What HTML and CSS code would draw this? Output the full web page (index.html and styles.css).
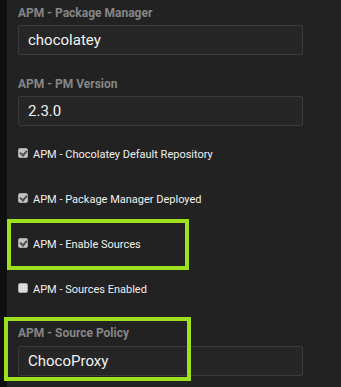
FILE: index.html
```html
<!DOCTYPE html>
<html lang="en">

<head>
    <meta charset="UTF-8">
    <title>APM Settings</title>
    <link rel="stylesheet" href="styles.css">
</head>

<body>
    <div class="page">
        <div class="rail"></div>

        <div class="content">
            <div class="field">
                <label class="field-label" for="pkgManager">APM - Package Manager</label>
                <input type="text" id="pkgManager" class="field-input" value="chocolatey">
            </div>
            <div class="field">
                <label class="field-label" for="pmVersion">APM - PM Version</label>
                <input type="text" id="pmVersion" class="field-input" value="2.3.0">
            </div>

            <div class="checks">
                <label class="check">
                    <span class="box checked"></span>
                    <span>APM - Chocolatey Default Repository</span>
                </label>
                <label class="check">
                    <span class="box checked"></span>
                    <span>APM - Package Manager Deployed</span>
                </label>
                <label class="check">
                    <span class="box checked"></span>
                    <span>APM - Enable Sources</span>
                </label>
                <label class="check">
                    <span class="box"></span>
                    <span>APM - Sources Enabled</span>
                </label>
            </div>

            <div class="field last">
                <label class="field-label" for="sourcePolicy">APM - Source Policy</label>
                <input type="text" id="sourcePolicy" class="field-input" value="ChocoProxy">
            </div>

            <!-- highlight boxes -->
            <div class="mark mark-sources"></div>
            <div class="mark mark-policy"></div>
        </div>
    </div>
</body>

</html>
```

FILE: styles.css
```css
body {
    margin: 0;
    background-color: #222222;
    font-family: Roboto, sans-serif;
}

.page {
    display: flex;
    height: 387px;
    overflow: hidden;
}

.rail {
    width: 7px;
    flex-shrink: 0;
    background-color: #101010;
}

.content {
    position: relative;
    flex: 1;
    padding: 5px 0 0 11px;
}

.field {
    margin-bottom: 21px;
}

.field-label {
    display: block;
    font-size: 12px;
    line-height: 16px;
    font-weight: bold;
    color: #868686;
    margin-bottom: 4px;
}

.field-input {
    display: block;
    width: 285px;
    height: 30px;
    box-sizing: border-box;
    padding: 0 9px;
    background-color: #262626;
    border: 1px solid #3b3b3b;
    border-radius: 2px;
    color: #f2f2f2;
    font-family: Roboto, sans-serif;
    font-size: 15px;
    outline: none;
}

.checks {
    display: flex;
    flex-direction: column;
    gap: 29px;
    margin-bottom: 27px;
}

.check {
    display: flex;
    align-items: flex-start;
    font-size: 11px;
    line-height: 16px;
    color: #f0f0f0;
}

.box {
    position: relative;
    width: 10px;
    height: 10px;
    margin: 1px 5px 0 0;
    box-sizing: border-box;
    border: 1px solid #a8a8a8;
    border-radius: 2px;
    background-color: #dcdcdc;
}

.box.checked {
    background-color: #c4c4c4;
}

.box.checked::after {
    content: "";
    position: absolute;
    left: 2px;
    top: 0;
    width: 3px;
    height: 5px;
    border: solid #505050;
    border-width: 0 2px 2px 0;
    transform: rotate(40deg);
}

.field.last .field-label {
    margin-bottom: 5px;
}

.mark {
    position: absolute;
    border: 4px solid #9fe01e;
}

.mark-sources {
    left: 0;
    top: 219px;
    width: 174px;
    height: 43px;
}

.mark-policy {
    left: -3px;
    top: 317px;
    width: 179px;
    height: 56px;
}
```
